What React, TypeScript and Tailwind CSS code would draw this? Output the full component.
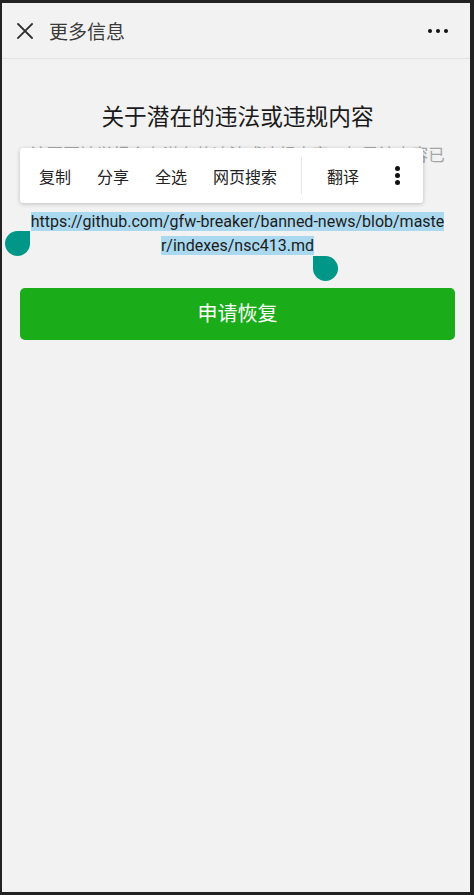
const cjk = { fontFamily: '"Noto Sans CJK SC", "Noto Sans", sans-serif' };
const mixed = { fontFamily: 'Roboto, "Noto Sans CJK SC", sans-serif' };

function CloseIcon() {
  return (
    <svg width="16" height="16" viewBox="0 0 16 16" className="shrink-0">
      <path d="M1 1L15 15M15 1L1 15" stroke="#2f2f2f" strokeWidth="1.8" strokeLinecap="square" />
    </svg>
  );
}

function Header() {
  return (
    <div className="flex h-[56px] items-center border-b border-[#e3e3e3] pl-[15px] pr-[22px]">
      <CloseIcon />
      <span className="ml-[16px] text-[19px] leading-none text-[#3a3a3a]" style={cjk}>
        更多信息
      </span>
      <div className="ml-auto flex gap-[4px]">
        <span className="h-[4px] w-[4px] rounded-full bg-[#111]" />
        <span className="h-[4px] w-[4px] rounded-full bg-[#111]" />
        <span className="h-[4px] w-[4px] rounded-full bg-[#111]" />
      </div>
    </div>
  );
}

// floating text-selection toolbar
function SelectionMenu() {
  const items = ["复制", "分享", "全选", "网页搜索"];
  return (
    <div
      className="absolute left-[18px] top-[145px] flex h-[55px] w-[403px] items-center rounded-[3px] bg-white pl-[19px] shadow-[0_1px_4px_rgba(0,0,0,0.22)]"
      style={cjk}
    >
      <div className="flex gap-[26px] text-[16px] text-[#222]">
        {items.map((t) => (
          <span key={t}>{t}</span>
        ))}
      </div>
      <div className="ml-[24px] h-[37px] w-px bg-[#e6e6e6]" />
      <span className="ml-[25px] text-[16px] text-[#222]">翻译</span>
      <div className="ml-[36px] flex flex-col gap-[2px]">
        <span className="h-[5px] w-[5px] rounded-full bg-[#111]" />
        <span className="h-[5px] w-[5px] rounded-full bg-[#111]" />
        <span className="h-[5px] w-[5px] rounded-full bg-[#111]" />
      </div>
    </div>
  );
}

export default function App() {
  return (
    <div className="h-[895px] w-[474px] overflow-hidden bg-[#232323] pb-[3px] pl-[2px] pr-[4px] pt-[3px]">
      <div className="relative flex h-full flex-col bg-[#f2f2f2]">
        <Header />

        <div className="flex flex-col pl-[18px] pr-[15px]">
          <h1 className="mt-[42px] text-center text-[22.7px] leading-[30px] text-[#1a1a1a]" style={cjk}>
            关于潜在的违法或违规内容
          </h1>
          <p
            className="mx-auto mt-[11px] w-[415px] text-[16.6px] leading-[24px] text-[#a6a6a6]"
            style={cjk}
          >
            该网页被举报含有潜在的违法或违规内容，如果该内容已删除或整改，可以申请恢复访问。
          </p>
          <p className="mt-[20px] text-center text-[16px] leading-[24px] text-[#1c1c1c]" style={mixed}>
            <span className="whitespace-nowrap bg-[#a9d8ef]">
              https://github.com/gfw-breaker/banned-news/blob/maste
            </span>
            <br />
            <span className="whitespace-nowrap bg-[#a9d8ef]">r/indexes/nsc413.md</span>
          </p>

          <button
            className="mt-[30px] flex h-[52px] w-full items-center justify-center rounded-[5px] bg-[#1aad19] pb-[3px] text-[20px] leading-[20px] text-white"
            style={cjk}
          >
            申请恢复
          </button>
        </div>

        <SelectionMenu />

        {/* selection handles */}
        <div className="absolute left-[3px] top-[228px] h-[25px] w-[25px] rounded-full rounded-tr-none bg-[#009688]" />
        <div className="absolute left-[311px] top-[253px] h-[25px] w-[25px] rounded-full rounded-tl-none bg-[#009688]" />
      </div>
    </div>
  );
}
